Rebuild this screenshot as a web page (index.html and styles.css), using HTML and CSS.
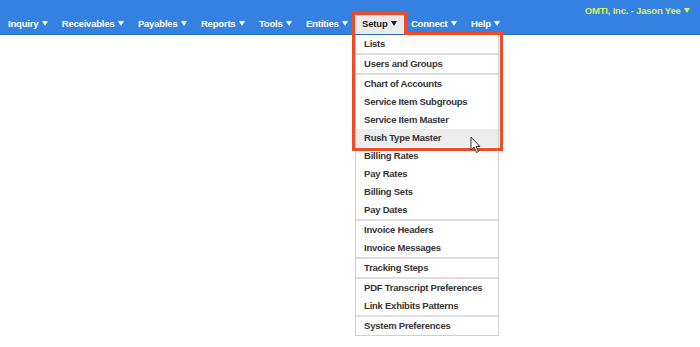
FILE: index.html
```html
<!DOCTYPE html>
<html lang="en">
<head>
  <meta charset="UTF-8">
  <title>OMTI - Setup</title>
  <link rel="stylesheet" href="styles.css">
</head>
<body>

  <!-- Top Navigation -->
  <div class="header">
    <div class="user-line">
      <span class="user">OMTI, Inc. - Jason Yee <i class="caret"></i></span>
    </div>
    <ul class="nav">
      <li><a href="#">Inquiry <i class="caret"></i></a></li>
      <li><a href="#">Receivables <i class="caret"></i></a></li>
      <li><a href="#">Payables <i class="caret"></i></a></li>
      <li><a href="#">Reports <i class="caret"></i></a></li>
      <li><a href="#">Tools <i class="caret"></i></a></li>
      <li><a href="#">Entities <i class="caret"></i></a></li>
      <li class="open">
        <a href="#">Setup <i class="caret"></i></a>
        <!-- Setup Dropdown -->
        <div class="dropdown">
          <div class="group">
            <a href="#">Lists</a>
          </div>
          <div class="group">
            <a href="#">Users and Groups</a>
          </div>
          <div class="group">
            <a href="#">Chart of Accounts</a>
            <a href="#">Service Item Subgroups</a>
            <a href="#">Service Item Master</a>
            <a href="#" class="hover">Rush Type Master</a>
            <a href="#">Billing Rates</a>
            <a href="#">Pay Rates</a>
            <a href="#">Billing Sets</a>
            <a href="#">Pay Dates</a>
          </div>
          <div class="group">
            <a href="#">Invoice Headers</a>
            <a href="#">Invoice Messages</a>
          </div>
          <div class="group">
            <a href="#">Tracking Steps</a>
          </div>
          <div class="group">
            <a href="#">PDF Transcript Preferences</a>
            <a href="#">Link Exhibits Patterns</a>
          </div>
          <div class="group">
            <a href="#">System Preferences</a>
          </div>
        </div>
      </li>
      <li><a href="#">Connect <i class="caret"></i></a></li>
      <li><a href="#">Help <i class="caret"></i></a></li>
    </ul>
  </div>

  <!-- Highlight annotation -->
  <svg class="highlight" width="700" height="347" viewBox="0 0 700 347">
    <path d="M353.5 13.5 H405.5 V33.5 H501.5 V149.5 H353.5 Z" fill="none" stroke="#ef4b26" stroke-width="3"/>
  </svg>

  <!-- Mouse pointer -->
  <svg class="pointer" width="12" height="18" viewBox="0 0 12 18">
    <path d="M1 1 V14 L4 11 L6.5 16.5 L8.5 15.5 L6 10.5 H10 Z" fill="#fff" stroke="#333" stroke-width="1" stroke-linejoin="round"/>
  </svg>

</body>
</html>
```

FILE: styles.css
```css
:root {
  --bar-color: #3481e2;
  --bar-edge: #2a70cf;
  --user-color: #d8f062;
  --menu-border: #cfcfcf;
  --text-color: #363636;
}

body {
  margin: 0;
  font-family: "Liberation Sans", Arial, sans-serif;
  background: #fff;
  position: relative;
  width: 700px;
  height: 347px;
  overflow: hidden;
}

.header {
  background: var(--bar-color);
  border-bottom: 1px solid var(--bar-edge);
  height: 34px;
}

.user-line {
  height: 12px;
  text-align: right;
  padding-right: 10px;
}

.user {
  color: var(--user-color);
  font-size: 9.5px;
  font-weight: bold;
  letter-spacing: -0.2px;
  line-height: 11px;
}

.caret {
  display: inline-block;
  width: 0;
  height: 0;
  border-left: 3.5px solid transparent;
  border-right: 3.5px solid transparent;
  border-top: 5px solid currentColor;
  vertical-align: 1px;
  margin-left: 1px;
}

.nav {
  list-style: none;
  margin: 0;
  padding: 0 0 0 1px;
  display: flex;
}

.nav > li {
  position: relative;
}

.nav > li > a {
  display: block;
  height: 22px;
  line-height: 23px;
  padding: 0 7px;
  color: #fff;
  font-size: 9.5px;
  font-weight: bold;
  letter-spacing: -0.2px;
  text-decoration: none;
}

.nav > li.open > a {
  background: #ebebeb;
  color: #1e1e1e;
  margin-top: 1px;
  height: 21px;
  line-height: 21px;
}

.dropdown {
  position: absolute;
  top: 23px;
  left: 0;
  width: 142px;
  background: #fff;
  border: 1px solid var(--menu-border);
  border-top: none;
  z-index: 5;
}

.group + .group {
  border-top: 2px solid #dedede;
}

.dropdown a {
  display: block;
  height: 18px;
  line-height: 18px;
  padding-left: 8px;
  color: var(--text-color);
  font-size: 9.5px;
  font-weight: bold;
  letter-spacing: -0.25px;
  text-decoration: none;
  white-space: nowrap;
}

.dropdown a.hover {
  background: #ececec;
}

.highlight {
  position: absolute;
  top: 0;
  left: 0;
  z-index: 10;
  pointer-events: none;
}

.pointer {
  position: absolute;
  left: 470px;
  top: 136px;
  z-index: 11;
}
```
